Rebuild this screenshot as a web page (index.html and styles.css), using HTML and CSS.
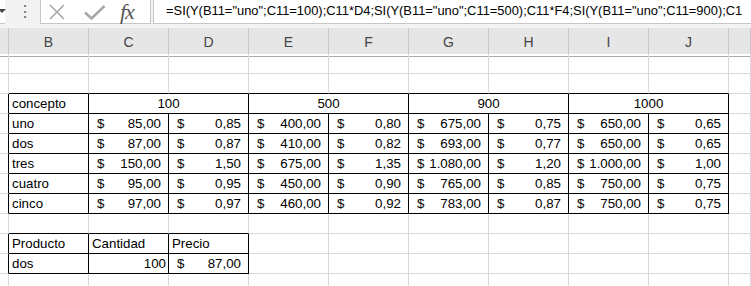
FILE: index.html
```html
<!DOCTYPE html>
<html lang="es">
<head>
<meta charset="utf-8">
<title>Hoja</title>
<link rel="stylesheet" href="styles.css">
</head>
<body>
<div class="toolbar">
  <div class="namebox"><span class="caret"></span></div>
  <div class="dots">⋮</div>
  <div class="btnbox">
    <svg class="ico-x" width="16" height="16" viewBox="0 0 16 16"><path d="M1 1L15 15M15 1L1 15" stroke="#a8a8a8" stroke-width="1.6" fill="none"/></svg>
    <svg class="ico-check" width="22" height="16" viewBox="0 0 22 16"><path d="M1 7.5L7.5 13.5L20.5 1" stroke="#a8a8a8" stroke-width="2.6" fill="none"/></svg>
    <span class="fx">fx</span>
  </div>
  <div class="formula">=SI(Y(B11="uno";C11=100);C11*D4;SI(Y(B11="uno";C11=500);C11*F4;SI(Y(B11="uno";C11=900);C1</div>
</div>
<div class="colheads">
  <div class="h"></div><div class="h">B</div><div class="h">C</div><div class="h">D</div><div class="h">E</div><div class="h">F</div><div class="h">G</div><div class="h">H</div><div class="h">I</div><div class="h">J</div><div class="h"></div>
</div>
<div class="sheet">
  <!-- row 1 -->
  <div class="c"></div><div class="c"></div><div class="c"></div><div class="c"></div><div class="c"></div><div class="c"></div><div class="c"></div><div class="c"></div><div class="c"></div><div class="c"></div><div class="c"></div>
  <!-- row 2 -->
  <div class="c"></div><div class="c bb"></div><div class="c bb"></div><div class="c bb"></div><div class="c bb"></div><div class="c bb"></div><div class="c bb"></div><div class="c bb"></div><div class="c bb"></div><div class="c bb"></div><div class="c"></div>
  <!-- row 3 -->
  <div class="c br"></div>
  <div class="c br bb txt">concepto</div>
  <div class="c br bb ctr span2">100</div>
  <div class="c br bb ctr span2">500</div>
  <div class="c br bb ctr span2">900</div>
  <div class="c br bb ctr span2">1000</div>
  <div class="c"></div>
  <!-- uno -->
  <div class="c br"></div>
  <div class="c br bb txt">uno</div>
  <div class="c br bb acc"><span>$</span><span>85,00</span></div>
  <div class="c br bb acc"><span>$</span><span>0,85</span></div>
  <div class="c br bb acc"><span>$</span><span>400,00</span></div>
  <div class="c br bb acc"><span>$</span><span>0,80</span></div>
  <div class="c br bb acc"><span>$</span><span>675,00</span></div>
  <div class="c br bb acc"><span>$</span><span>0,75</span></div>
  <div class="c br bb acc"><span>$</span><span>650,00</span></div>
  <div class="c br bb acc"><span>$</span><span>0,65</span></div>
  <div class="c"></div>
  <!-- dos -->
  <div class="c br"></div>
  <div class="c br bb txt">dos</div>
  <div class="c br bb acc"><span>$</span><span>87,00</span></div>
  <div class="c br bb acc"><span>$</span><span>0,87</span></div>
  <div class="c br bb acc"><span>$</span><span>410,00</span></div>
  <div class="c br bb acc"><span>$</span><span>0,82</span></div>
  <div class="c br bb acc"><span>$</span><span>693,00</span></div>
  <div class="c br bb acc"><span>$</span><span>0,77</span></div>
  <div class="c br bb acc"><span>$</span><span>650,00</span></div>
  <div class="c br bb acc"><span>$</span><span>0,65</span></div>
  <div class="c"></div>
  <!-- tres -->
  <div class="c br"></div>
  <div class="c br bb txt">tres</div>
  <div class="c br bb acc"><span>$</span><span>150,00</span></div>
  <div class="c br bb acc"><span>$</span><span>1,50</span></div>
  <div class="c br bb acc"><span>$</span><span>675,00</span></div>
  <div class="c br bb acc"><span>$</span><span>1,35</span></div>
  <div class="c br bb acc"><span>$</span><span>1.080,00</span></div>
  <div class="c br bb acc"><span>$</span><span>1,20</span></div>
  <div class="c br bb acc"><span>$</span><span>1.000,00</span></div>
  <div class="c br bb acc"><span>$</span><span>1,00</span></div>
  <div class="c"></div>
  <!-- cuatro -->
  <div class="c br"></div>
  <div class="c br bb txt">cuatro</div>
  <div class="c br bb acc"><span>$</span><span>95,00</span></div>
  <div class="c br bb acc"><span>$</span><span>0,95</span></div>
  <div class="c br bb acc"><span>$</span><span>450,00</span></div>
  <div class="c br bb acc"><span>$</span><span>0,90</span></div>
  <div class="c br bb acc"><span>$</span><span>765,00</span></div>
  <div class="c br bb acc"><span>$</span><span>0,85</span></div>
  <div class="c br bb acc"><span>$</span><span>750,00</span></div>
  <div class="c br bb acc"><span>$</span><span>0,75</span></div>
  <div class="c"></div>
  <!-- cinco -->
  <div class="c br"></div>
  <div class="c br bb txt">cinco</div>
  <div class="c br bb acc"><span>$</span><span>97,00</span></div>
  <div class="c br bb acc"><span>$</span><span>0,97</span></div>
  <div class="c br bb acc"><span>$</span><span>460,00</span></div>
  <div class="c br bb acc"><span>$</span><span>0,92</span></div>
  <div class="c br bb acc"><span>$</span><span>783,00</span></div>
  <div class="c br bb acc"><span>$</span><span>0,87</span></div>
  <div class="c br bb acc"><span>$</span><span>750,00</span></div>
  <div class="c br bb acc"><span>$</span><span>0,75</span></div>
  <div class="c"></div>
  <!-- row 9 -->
  <div class="c"></div><div class="c bb"></div><div class="c bb"></div><div class="c bb"></div><div class="c"></div><div class="c"></div><div class="c"></div><div class="c"></div><div class="c"></div><div class="c"></div><div class="c"></div>
  <!-- row 10 -->
  <div class="c br"></div>
  <div class="c br bb txt">Producto</div>
  <div class="c br bb txt">Cantidad</div>
  <div class="c br bb txt">Precio</div>
  <div class="c"></div><div class="c"></div><div class="c"></div><div class="c"></div><div class="c"></div><div class="c"></div><div class="c"></div>
  <!-- row 11 -->
  <div class="c br"></div>
  <div class="c br bb txt">dos</div>
  <div class="c br bb num">100</div>
  <div class="c br bb acc"><span>$</span><span>87,00</span></div>
  <div class="c"></div><div class="c"></div><div class="c"></div><div class="c"></div><div class="c"></div><div class="c"></div><div class="c"></div>
  <!-- row 12 -->
  <div class="c"></div><div class="c"></div><div class="c"></div><div class="c"></div><div class="c"></div><div class="c"></div><div class="c"></div><div class="c"></div><div class="c"></div><div class="c"></div><div class="c"></div>
</div>
</body>
</html>
```

FILE: styles.css
```css
* { box-sizing: border-box; }
html, body {
  margin: 0;
  padding: 0;
  background: #ffffff;
  overflow: hidden;
  width: 751px;
  height: 286px;
}
body {
  font-family: "Liberation Sans", Arial, sans-serif;
  color: #000;
}

/* formula bar */
.toolbar {
  display: flex;
  height: 28px;
  background: #f3f3f3;
  align-items: flex-start;
}
.namebox {
  width: 5px;
  height: 24px;
  position: relative;
  border-bottom: 1px solid #c6c6c6;
  background: #ffffff;
}
.caret {
  position: absolute;
  left: -2px;
  top: 9px;
  border-left: 4px solid transparent;
  border-right: 4px solid transparent;
  border-top: 4px solid #444;
}
.dots {
  width: 35px;
  text-align: center;
  color: #6a6a6a;
  font-size: 16px;
  line-height: 24px;
  padding-left: 5px;
}
.btnbox {
  width: 111px;
  height: 24px;
  background: #ffffff;
  border-left: 1px solid #c6c6c6;
  border-right: 1px solid #c6c6c6;
  border-bottom: 1px solid #c6c6c6;
  display: flex;
  align-items: center;
  padding-left: 8px;
}
.ico-x { margin-top: 1px; }
.ico-check { margin-left: 19px; margin-top: 3px; }
.fx {
  font-family: "Liberation Serif", "DejaVu Serif", serif;
  font-style: italic;
  font-size: 22px;
  color: #555555;
  margin-left: 14px;
  letter-spacing: -1px;
  line-height: 22px;
}
.formula {
  margin-left: 2px;
  flex: 1;
  min-width: 0;
  height: 24px;
  background: #ffffff;
  border-left: 1px solid #c6c6c6;
  border-bottom: 1px solid #c6c6c6;
  padding-left: 12px;
  font-size: 12.9px;
  line-height: 22px;
  white-space: nowrap;
  overflow: hidden;
  color: #000;
}

/* column headers */
.colheads {
  display: grid;
  grid-template-columns: 9px repeat(9, 80px) 22px;
  height: 26px;
  background: #e6e6e6;
}
.h {
  border-right: 1px solid #c8c8c8;
  border-bottom: 1px solid #ababab;
  text-align: center;
  font-size: 14px;
  color: #444;
  line-height: 28px;
}

/* sheet cells */
.sheet {
  display: grid;
  grid-template-columns: 9px repeat(9, 80px) 22px;
  grid-auto-rows: 20px;
  font-size: 13.3px;
}
.c {
  border-right: 1px solid #d9d9d9;
  border-bottom: 1px solid #d9d9d9;
  line-height: 19px;
  white-space: nowrap;
  overflow: hidden;
}
.bb { border-bottom-color: #000; }
.br { border-right-color: #000; }
.span2 { grid-column: span 2; }
.txt { padding-left: 3px; }
.ctr { text-align: center; }
.num { text-align: right; padding-right: 2px; }
.acc {
  display: flex;
  justify-content: space-between;
  padding: 0 7px 0 8px;
}
```
